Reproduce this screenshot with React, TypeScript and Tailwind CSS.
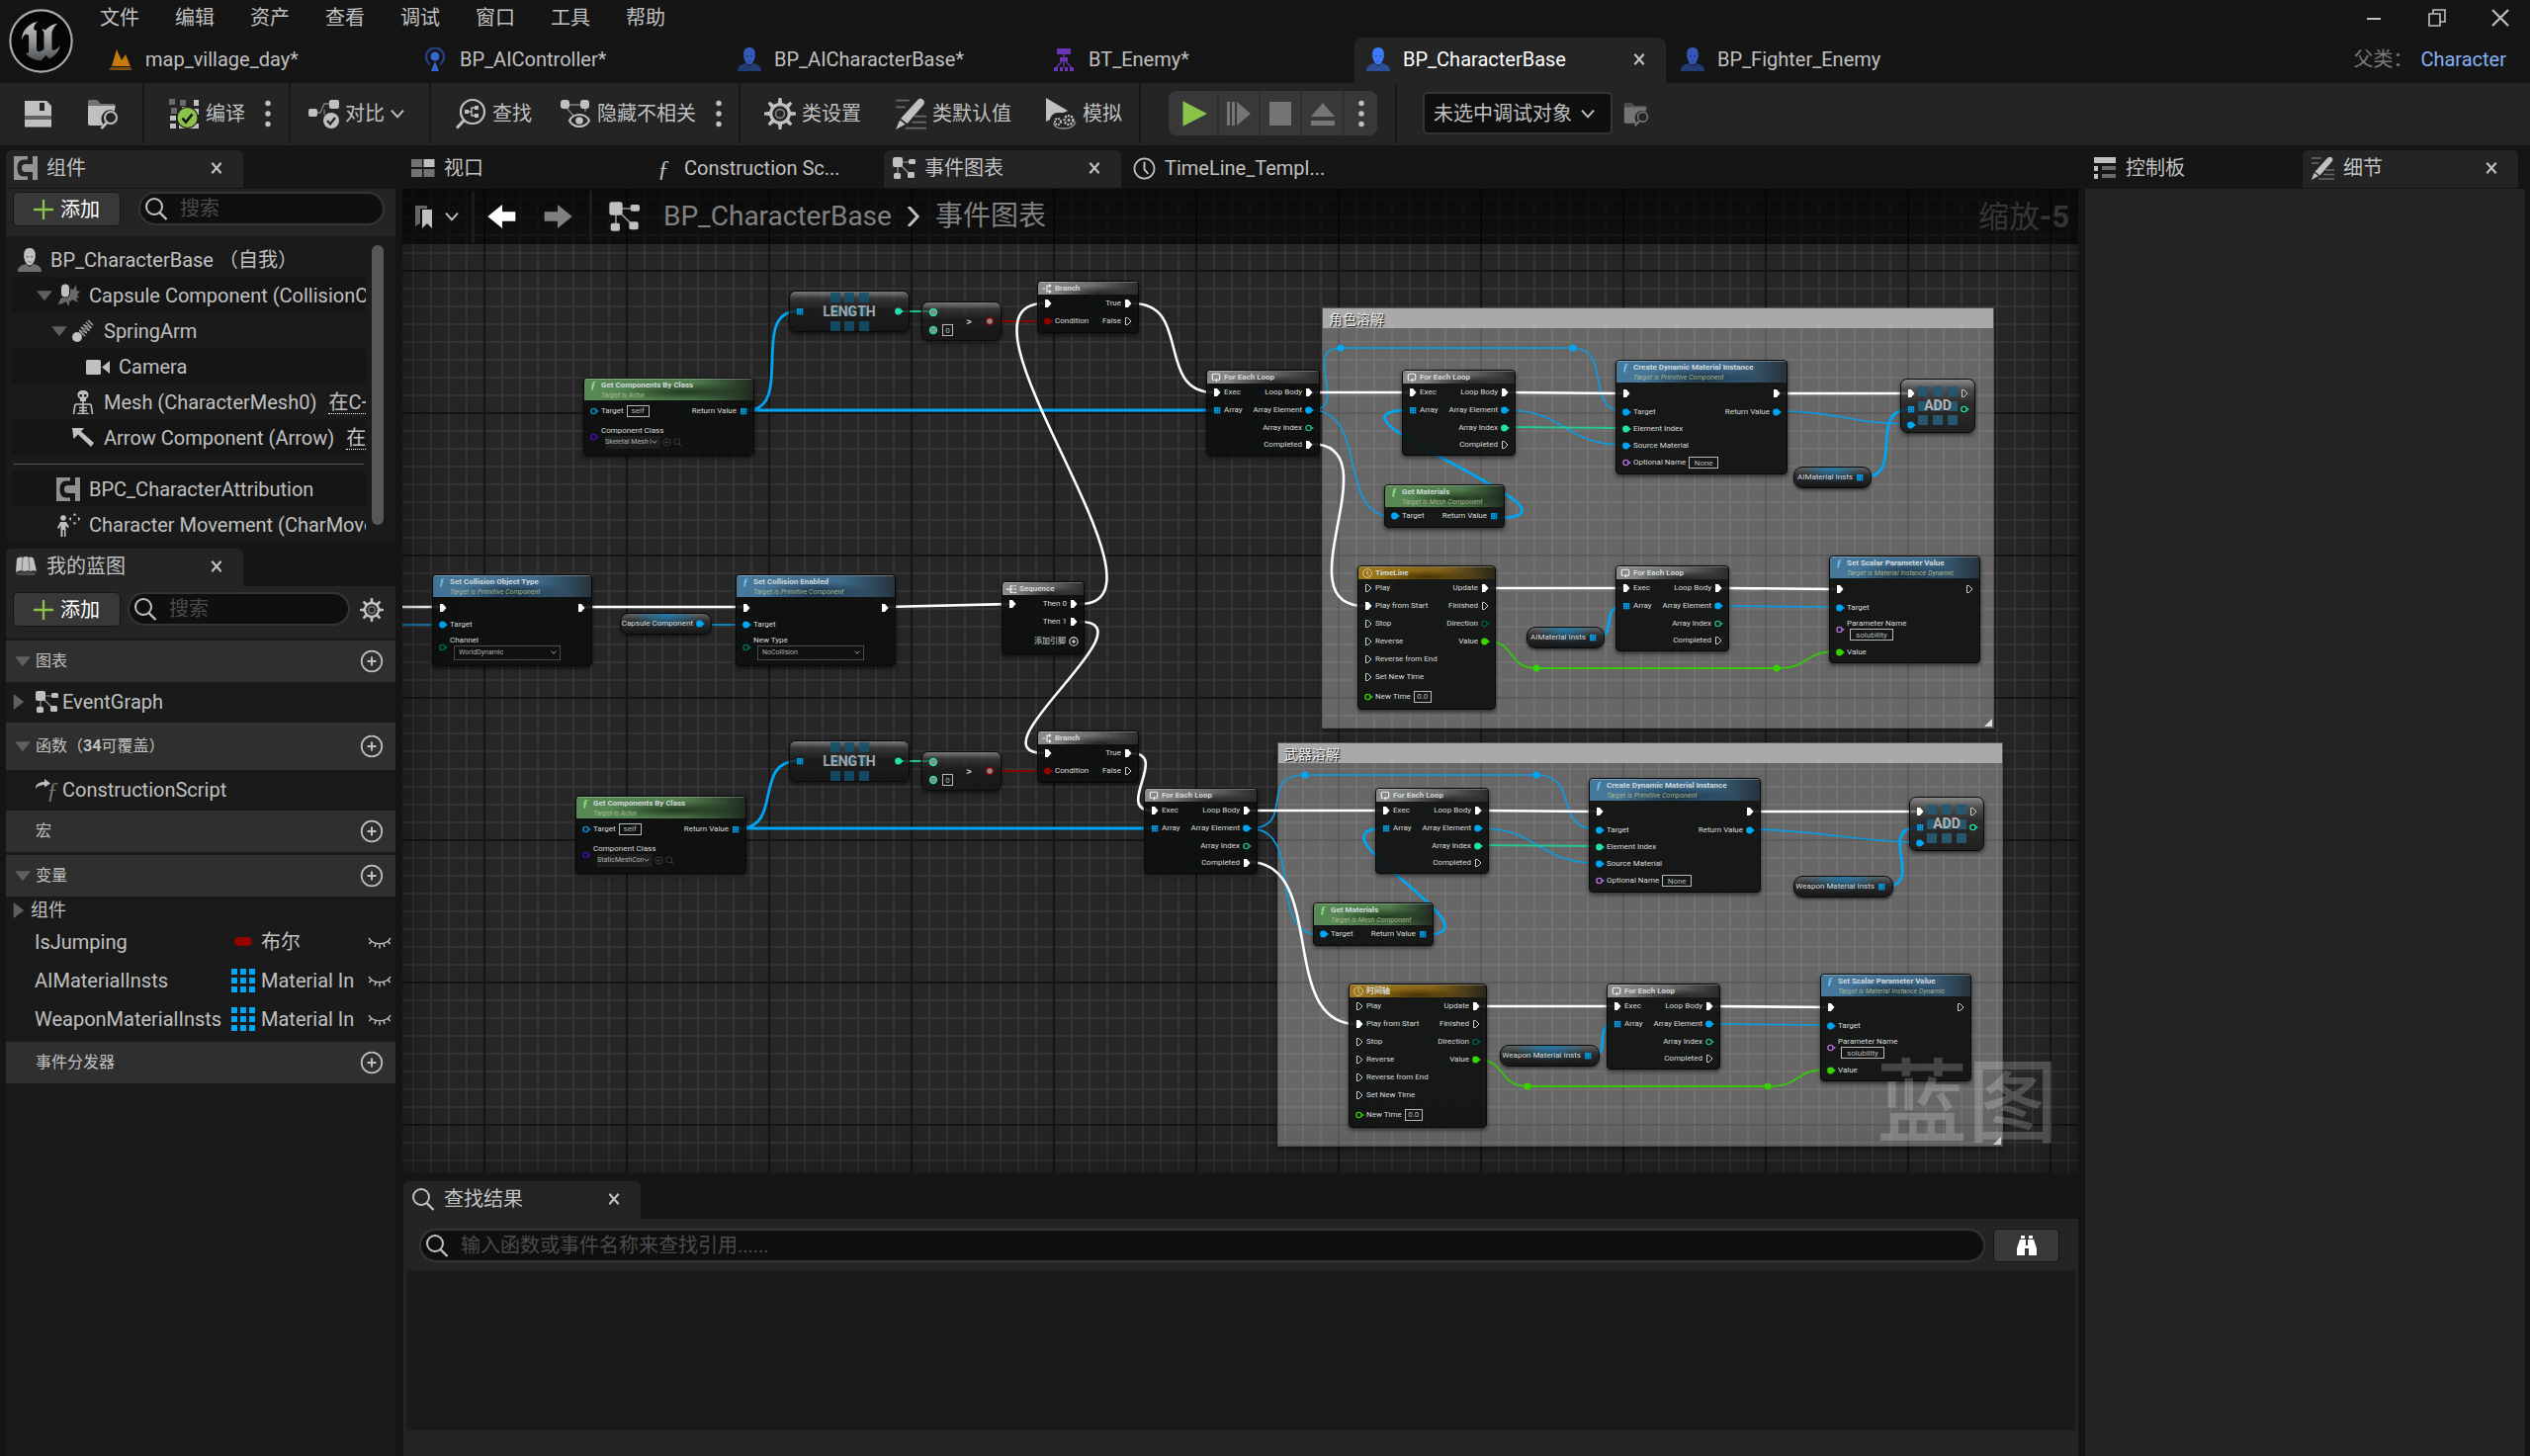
import React from "react";

/* ---------- icons ---------- */

type IconProps = { className?: string };

function Svg({ box = 24, className = "", children }: { box?: number; className?: string; children: React.ReactNode }) {
  return (
    <svg viewBox={`0 0 ${box} ${box}`} className={`shrink-0 ${className}`} fill="currentColor" aria-hidden="true">
      {children}
    </svg>
  );
}

const CloseX = ({ className = "size-[14px]" }: IconProps) => (
  <Svg className={className}>
    <path d="M4 3l16 18M20 3L4 21" stroke="currentColor" strokeWidth="3.6" fill="none" />
  </Svg>
);

const Chevron = ({ className = "size-4" }: IconProps) => (
  <Svg className={className}>
    <path d="M3 7l9 10 9-10" stroke="currentColor" strokeWidth="3" fill="none" />
  </Svg>
);

const SearchIcon = ({ className = "size-6" }: IconProps) => (
  <Svg className={className}>
    <circle cx="10" cy="10" r="8" fill="none" stroke="currentColor" strokeWidth="2" />
    <path d="M15.5 16l7 7" stroke="currentColor" strokeWidth="2.4" />
  </Svg>
);

const GraphIcon = ({ className = "size-6" }: IconProps) => (
  <Svg className={className}>
    <path d="M6 6h14M6 6v14M6 6l13 13" stroke="currentColor" strokeWidth="1.2" fill="none" opacity=".75" />
    <rect x="1" y="1" width="10" height="10" rx="2" />
    <rect x="17" y="3" width="7" height="5" rx="1.5" />
    <rect x="2" y="17" width="7" height="6" rx="1.5" />
    <rect x="16" y="16" width="7" height="6" rx="1.5" />
  </Svg>
);

const ComponentIcon = ({ className = "size-6" }: IconProps) => (
  <Svg className={className}>
    <path d="M0 0h14v3.500h-4C5.500 3.500 3.500 7 3.500 12s2 8.500 6.500 8.500h4V24H0z" opacity=".72" />
    <path d="M24 0v24h-5v-8h-7c-3 0-4-1.500-4-4s1-4 4-4h7V0z" opacity=".72" />
  </Svg>
);

const PersonIcon = ({ head, body, className = "size-6" }: IconProps & { head: string; body: string }) => (
  <Svg className={className}>
    <path fill={body} d="M0 24c0-5 3-6.500 8-8l4 3 4-3c5 1.500 8 3 8 8z" />
    <path fill={head} d="M12 0C8 0 5.800 3 6.300 7.500 6 8 5.800 9 6.600 10.500 7 13 9 17.500 12 17.500s5-4.500 5.400-7c.8-1.500.6-2.500.3-3C18.200 3 16 0 12 0z" />
    <path fill={body} d="M8.500 8h2.500v1.300H8.500zM13 8h2.500v1.300H13zM10.500 13.500h3v1h-3z" />
  </Svg>
);

const GearIcon = ({ className = "size-6" }: IconProps) => (
  <Svg className={className}>
    <g>
      {[0, 45, 90, 135, 180, 225, 270, 315].map((a) => (
        <path key={a} d="M10.300 5l.6-5h2.200l.6 5z" transform={`rotate(${a} 12 12)`} />
      ))}
    </g>
    <circle cx="12" cy="12" r="7" fill="none" stroke="currentColor" strokeWidth="2.400" />
    <circle cx="12" cy="12" r="3.300" fill="none" stroke="currentColor" strokeWidth="1.200" opacity=".6" />
  </Svg>
);

const PencilIcon = ({ className = "size-6" }: IconProps) => (
  <Svg className={className}>
    <path d="M1 2h10M1 7h7M15 14h9M13 18.500h11M8 23h16" stroke="currentColor" strokeWidth="1.300" opacity=".45" />
    <path d="M17.500 1.500c1-1 2.500-1.200 3.800-.2s1.500 2.500.7 3.700L9.500 19.500l-5-3.800z" />
    <path d="M3.800 16.800l4.200 3.300L.8 24z" />
  </Svg>
);

const ClockIcon = ({ className = "size-6" }: IconProps) => (
  <Svg className={className}>
    <circle cx="12" cy="12" r="10.500" fill="none" stroke="currentColor" strokeWidth="1.800" />
    <path d="M12 5v8l4 4.500" stroke="currentColor" strokeWidth="2" fill="none" />
  </Svg>
);

const FolderSearch = ({ className = "size-8" }: IconProps) => (
  <Svg box={32} className={className}>
    <path d="M1 3.500C1 2.500 2 2 3 2h7l4 4h13c1 0 2 1 2 2v3H1z" opacity=".5" />
    <path d="M1 8h27v5.500a9 9 0 00-11.500 13.500l-1.500 1H3c-1 0-2-1-2-2z" />
    <circle cx="24" cy="20" r="6" fill="none" stroke="currentColor" strokeWidth="2" />
    <path d="M20 25l-5.500 6" stroke="currentColor" strokeWidth="2.600" />
  </Svg>
);

const SaveIcon = ({ className = "size-8" }: IconProps) => (
  <Svg box={32} className={className}>
    <path fillRule="evenodd" d="M2 3h22l5 5v10H2zM17 5v8h5V5z" />
    <path d="M2 18h27v4H2z" opacity=".4" />
    <path d="M2 22h27v7.500H2z" />
  </Svg>
);

const CompileIcon = ({ className = "size-8" }: IconProps) => (
  <Svg box={32} className={className}>
    <g opacity=".45">
      <path d="M1 1h6v6H1zM12 2h6v6h-6zM3 10h6v6H3z" />
    </g>
    <path d="M26 2h5v6h-5zM14 9h5v5h-5zM25 11h6v6h-6zM2 18h6v5H2zM2 26h6v5H2zM11 26h20v5H11z" />
    <circle cx="19.500" cy="20" r="11" fill="#1b1b1b" />
    <circle cx="19.500" cy="20" r="10" fill="#8bc24a" />
    <path d="M14.500 20.500l3.500 4 6.500-8" stroke="#111" strokeWidth="2.600" fill="none" />
  </Svg>
);

const DiffIcon = ({ className = "size-8" }: IconProps) => (
  <Svg box={32} className={className}>
    <path d="M6 15h7l4-9h8M17 12v5" stroke="currentColor" strokeWidth="1.300" fill="none" opacity=".6" />
    <rect x="1" y="11" width="9" height="8" rx="2" />
    <rect x="22" y="2" width="10" height="9" rx="2" />
    <circle cx="24" cy="23" r="8" />
    <path d="M20 23l3 3.500 5-6.500" stroke="#242424" strokeWidth="2.300" fill="none" />
  </Svg>
);

const FindIcon = ({ className = "size-8" }: IconProps) => (
  <Svg box={32} className={className}>
    <circle cx="18" cy="14" r="12" fill="none" stroke="currentColor" strokeWidth="2.200" />
    <path d="M9.500 22.500L2 30.500" stroke="currentColor" strokeWidth="3" />
    <path d="M12 14h5M21 10h-4v8h4" stroke="currentColor" strokeWidth="1.400" fill="none" />
    <path d="M10 12h4v4h-4zM20 8h4v4h-4zM20 16h4v4h-4z" />
  </Svg>
);

const HideIcon = ({ className = "size-8" }: IconProps) => (
  <Svg box={32} className={className}>
    <path d="M5 7h22M6 9l8 9M26 9v5" stroke="currentColor" strokeWidth="1.400" fill="none" opacity=".6" />
    <rect x="1" y="2" width="9" height="9" rx="3" />
    <rect x="21" y="2" width="9" height="9" rx="3" />
    <path d="M10 23c4-8 16-8 20 0-4 8-16 8-20 0z" fill="none" stroke="currentColor" strokeWidth="2" />
    <circle cx="20" cy="23" r="3.800" />
  </Svg>
);

const SimulateIcon = ({ className = "size-8" }: IconProps) => (
  <Svg box={32} className={className}>
    <path d="M1 0l22 13L1 24z" />
    <rect x="5" y="15" width="27" height="16" rx="8" fill="#242424" />
    <path d="M9 25v2c3 4 6 4 10 4s10-1 12-7" stroke="currentColor" strokeWidth="1.300" fill="none" opacity=".7" />
    <circle cx="13" cy="24" r="3" fill="none" stroke="currentColor" strokeWidth="2" strokeDasharray="1.800 1" />
    <circle cx="24" cy="22.500" r="4.400" fill="none" stroke="currentColor" strokeWidth="2.400" strokeDasharray="2 1.200" />
    <circle cx="24" cy="22.500" r="1.500" />
  </Svg>
);

const MapIcon = () => (
  <Svg className="size-6">
    <path fill="#c47a0c" d="M3 19L8 2l5 11 4-6 5 12z" />
    <path fill="#7a4f12" d="M2 20h20l1.500 3H.5z" />
  </Svg>
);

const ControllerIcon = () => (
  <Svg className="size-6">
    <circle cx="12" cy="9" r="4.500" fill="#3b66d1" />
    <path d="M7 17A9 9 0 1117 17" fill="none" stroke="#243f7c" strokeWidth="2.500" />
    <path d="M12 14l4 10H8z" fill="#3b66d1" />
  </Svg>
);

const TreeIcon = () => (
  <Svg className="size-6">
    <g fill="#6c35b8">
      <path d="M5 1h14v6H5zM8 10h8v4H8zM2 20h4v4H2zM8 20h3v4H8zM13 20h3v4h-3zM18 20h4v4h-4z" />
    </g>
    <path d="M12 7v13M10 14l-6 7M14 14l6 7" stroke="#6c35b8" strokeWidth="1.400" />
  </Svg>
);

const ViewportIcon = () => (
  <Svg className="size-6">
    <path d="M0 3h11v8H0zM0 13h11v8H0zM12.500 13h11v8h-11z" opacity=".55" />
    <path d="M12.500 3h11v8h-11z" />
  </Svg>
);

const PaletteIcon = () => (
  <Svg className="size-6">
    <path d="M1 1h22v6H1zM1 10h4v5H1zM1 18h4v5H1z" />
    <path d="M9 10h14v4H9zM9 18h14v4H9z" opacity=".5" />
  </Svg>
);

const BookIcon = () => (
  <Svg className="size-6">
    <path d="M3 4c2-1.500 4-2 6-1 2-1.500 5-1.500 6 0 2-1 4-.5 5 1l3 13c-2-1-4-1-6 0-2-1-4-1-6 0-2-1-6-1-9 1z" />
    <path d="M1 19c6-2 16-2 22 0l-3 2H5z" opacity=".25" />
    <path d="M9 3L8 17M15 3l1 14" stroke="#777" strokeWidth="1" />
  </Svg>
);

const CapsuleIcon = () => (
  <Svg className="size-6">
    <path d="M14 5l3 1 3-5 .5 6L24 8l-3 3 2 3-3 .5 2 4.500-6-3-1.500 2-1-1-1 6-3-5-3 2-5 1 3-6 3-2z" opacity=".5" />
    <rect x="4.500" y="0" width="9" height="14" rx="4" stroke="#151515" strokeWidth="1" />
  </Svg>
);

const SpringIcon = () => (
  <Svg className="size-6">
    <circle cx="6" cy="18" r="5" />
    <path d="M8 11l6 6M10 8l6 6M12.500 5.500l6 6M15 3l5.500 6M17 1l5 5" stroke="currentColor" strokeWidth="1.500" opacity=".8" />
    <path d="M8 11l8 3M10 8l8.500 3.500M12.500 5.500L20 9" stroke="currentColor" strokeWidth=".9" opacity=".8" />
  </Svg>
);

const CameraIcon = () => (
  <Svg className="size-6">
    <rect x="0" y="5" width="15" height="15" rx="1.500" />
    <path d="M16 12.500L24 6v13z" />
  </Svg>
);

const SkeletonIcon = () => (
  <Svg className="size-6">
    <path fillRule="evenodd" d="M12 0c-4 0-5.500 2-5.500 4.500C6.500 7 8 8 9 8.500V11h6V8.500c1-.5 2.500-1.500 2.500-4C17.500 2 16 0 12 0zM8.500 4h2.500v2.500H8.500zM13 4h2.500v2.500H13z" />
    <path d="M12 11v13M4 14h16M8 17.500h8M8 20.500h8M6 23.500h12M4 14L2.500 24M20 14l1.500 10" stroke="currentColor" strokeWidth="1.600" fill="none" />
  </Svg>
);

const ArrowCompIcon = () => (
  <Svg className="size-6">
    <path d="M1 2h12l-3 3.500L23 17l-3 4L7 8.500 2.500 13z" />
  </Svg>
);

const MovementIcon = () => (
  <Svg className="size-6">
    <circle cx="7" cy="5" r="2.800" />
    <path d="M4 9h6l3 5-1.500 1-2-2.500V24H8v-7H6.500v7H4.500V12.500L2.500 16 1 15z" />
    <path d="M18.500 0l2 2.500h-4zM18.500 12l2-2.500h-4zM12.500 6l2.500-2v4zM24.500 6L22 4v4z" />
  </Svg>
);

const ConstructIcon = () => (
  <span className="relative size-6 shrink-0">
    <Svg className="absolute inset-0 size-6">
      <path d="M1 11c0-5 4-7 9-7V1l6 4.500-6 4V7C6 7 3 8 1 11z" />
    </Svg>
    <FGlyph className="absolute right-0 bottom-0 text-[24px] text-[#777]" />
  </span>
);

const ClosedEye = () => (
  <Svg className="size-6">
    <path d="M1 8c4 7.500 18 7.500 22 0M3.500 11.500L1.500 14M8 14l-1 3M12 15v3.500M16 14l1 3M20.500 11.500l2 2.500" stroke="currentColor" strokeWidth="1.500" fill="none" />
  </Svg>
);

const PlusCircle = () => (
  <Svg className="size-6">
    <circle cx="12" cy="12" r="10.300" fill="none" stroke="currentColor" strokeWidth="1.700" />
    <path d="M12 7.500v9M7.500 12h9" stroke="currentColor" strokeWidth="2" />
  </Svg>
);

const LoopIcon = () => (
  <Svg className="size-[10px] text-[#f0f0f0]">
    <path d="M7 18c-3 0-4-1-4-4V7c0-3 1-4 4-4h10c3 0 4 1 4 4v7c0 3-1 4-4 4h-1" stroke="currentColor" strokeWidth="2.800" fill="none" />
    <path d="M8 18l7-5v10z" />
  </Svg>
);

const BranchIcon = () => (
  <Svg className="size-[10px] text-[#f0f0f0]">
    <path d="M1 12h7M19 5h-7v14h7" stroke="currentColor" strokeWidth="2.600" fill="none" />
    <path d="M17 0l6 5-6 5zM17 14l6 5-6 5z" />
  </Svg>
);

const SequenceIcon = () => (
  <Svg className="size-[10px] text-[#f0f0f0]">
    <path d="M0 12h10M10 3v18" stroke="currentColor" strokeWidth="3" fill="none" />
    <path d="M10 4h14M10 12h14M10 20h14" stroke="currentColor" strokeWidth="2.600" fill="none" strokeDasharray="6 2" />
  </Svg>
);

const FGlyph = ({ className = "" }: IconProps) => (
  <span className={`shrink-0 font-['Liberation_Serif',serif] leading-none italic ${className}`} aria-hidden="true">
    ƒ
  </span>
);

const Dots = () => (
  <Svg className="h-[26px] w-[6px] overflow-visible">
    <circle cx="12" cy="-30" r="11" />
    <circle cx="12" cy="12" r="11" />
    <circle cx="12" cy="54" r="11" />
  </Svg>
);

const Twisty = ({ open = false }: { open?: boolean }) => (
  <Svg className="size-4 text-[#5f5f5f]">{open ? <path d="M0 5h24L12 20z" /> : <path d="M4 0v24L20 12z" />}</Svg>
);

/* ---------- graph pins ---------- */

type PinKind = "exec" | "execOff" | "dot" | "ring" | "array";
type PinSpec = { kind: PinKind; color?: string; label?: string; field?: React.ReactNode };

const BLUE = "#00a6f4";
const GREEN = "#22e0aa";
const LIME = "#37d300";
const RED = "#950000";
const VIOLET = "#b56fe0";

function Pin({ kind, color = "#ffffff" }: { kind: PinKind; color?: string }) {
  return (
    <svg viewBox="0 0 10 10" className="size-[10px] shrink-0" aria-hidden="true">
      {kind === "exec" && <path d="M2 1h3l3.500 4L5 9H2z" fill="#fff" />}
      {kind === "execOff" && <path d="M2.500 1.500h2l3.500 3.500-3.500 3.500h-2z" fill="none" stroke="#d0d0d0" />}
      {kind === "dot" && (
        <g fill={color}>
          <circle cx="4.500" cy="5" r="3.400" />
          <path d="M7 3l3 2-3 2z" />
        </g>
      )}
      {kind === "ring" && (
        <g>
          <circle cx="4.500" cy="5" r="2.600" fill="#0c0f0d" stroke={color} strokeWidth="1.400" />
          <path d="M7.500 3.500L10 5 7.500 6.500z" fill={color} />
        </g>
      )}
      {kind === "array" &&
        [0, 1, 2].map((r) =>
          [0, 1, 2].map((c) => <rect key={`${r}${c}`} x={2 + c * 2.2} y={2 + r * 2.2} width="1.900" height="1.900" fill={color} />),
        )}
    </svg>
  );
}

const exec = (label?: string): PinSpec => ({ kind: "exec", label });
const execOff = (label?: string): PinSpec => ({ kind: "execOff", label });
const dot = (color: string, label?: string): PinSpec => ({ kind: "dot", color, label });
const ring = (color: string, label?: string, field?: React.ReactNode): PinSpec => ({ kind: "ring", color, label, field });
const arr = (label?: string): PinSpec => ({ kind: "array", color: BLUE, label });

const Field = ({ value, label, className }: { value: string; label: string; className: string }) => (
  <input
    aria-label={label}
    defaultValue={value}
    className={`h-[12px] border border-[#b8b8b8] bg-transparent text-center text-[8px] leading-none text-[#b8b8b8] outline-none ${className}`}
  />
);

const MiniSelect = ({ value, label, className }: { value: string; label: string; className: string }) => (
  <span className={`relative flex items-center ${className}`}>
    <select aria-label={label} className="size-full appearance-none overflow-hidden bg-transparent pr-[9px] text-[7px] leading-none text-[#b0b0b0] outline-none">
      <option>{value}</option>
    </select>
    <Chevron className="pointer-events-none absolute right-[3px] size-[6px] text-[#cccccc]" />
  </span>
);

/* ---------- graph nodes ---------- */

const ROW = {
  xs: "h-[14px]",
  s: "h-[17px]",
  m: "h-[18px]",
  l: "h-[21px]",
  xl: "h-[28px]",
  xxl: "h-[32px]",
};

type Row = { size: keyof typeof ROW; l?: PinSpec; r?: PinSpec; stacked?: boolean; extra?: React.ReactNode };

type Tone = "blue" | "green" | "gray" | "gold";

const TONE: Record<Tone, string> = {
  blue: "bg-[radial-gradient(ellipse_at_50%_80%,rgba(8,18,26,0.7),transparent_50%),linear-gradient(to_right,#47799d_0%,#3f6c8e_65%,#26333d_100%)]",
  green: "bg-[radial-gradient(ellipse_at_60%_60%,rgba(14,28,12,0.7),transparent_50%),linear-gradient(to_right,#588a55_0%,#4f7c4c_65%,#1f2a20_100%)]",
  gray: "bg-[radial-gradient(ellipse_at_60%_90%,rgba(10,10,10,0.7),transparent_50%),linear-gradient(to_right,#8c8c8c_0%,#6e6e6e_55%,#2b2b2b_100%)]",
  gold: "bg-[radial-gradient(ellipse_at_50%_80%,rgba(40,26,0,0.7),transparent_50%),linear-gradient(to_right,#9b761a_0%,#866517_60%,#2a261b_100%)]",
};

type NodeData = {
  x: number;
  y: number;
  w: number;
  tone: Tone;
  title: string;
  sub?: string;
  icon: React.ReactNode;
  rows: Row[];
};

/* Graph coordinates of the canvas' top-left corner. */
const VIEW = { x: 407, y: 191 };

function PinSide({ pin, side, stacked }: { pin?: PinSpec; side: "l" | "r"; stacked?: boolean }) {
  if (!pin) return <span />;
  return (
    <span className={`flex items-center gap-[2px] ${side === "r" ? "flex-row-reverse" : ""}`}>
      <Pin kind={pin.kind} color={pin.color} />
      <span className={stacked ? "flex flex-col items-start" : "flex items-center gap-[3px]"}>
        {pin.label && <span className={stacked ? "leading-[10px]" : "leading-none"}>{pin.label}</span>}
        {pin.field}
      </span>
    </span>
  );
}

function GraphNode({ n }: { n: NodeData }) {
  return (
    <article
      className="absolute overflow-hidden rounded-[4px] border border-[#080808] bg-[#0c0f0d]/90 text-[8px] text-[#dcdcdc] shadow-[0_2px_4px_rgba(0,0,0,0.6)]"
      style={{ left: n.x - VIEW.x, top: n.y - VIEW.y, width: n.w }}
    >
      <header className={`flex items-center gap-[3px] border-t border-white/30 px-1 whitespace-nowrap ${n.sub ? "h-[22px]" : "h-[13px]"} ${TONE[n.tone]}`}>
        <span className={`flex w-[10px] justify-center ${n.sub ? "self-start" : ""}`}>{n.icon}</span>
        <span className="flex flex-col">
          <span className="leading-[10px] font-bold text-[#d3d9da]">{n.title}</span>
          {n.sub && <span className="text-[7px] leading-[10px] text-[#a9b88f] italic">{n.sub}</span>}
        </span>
      </header>
      {n.rows.map((r, i) => (
        <div key={i} className={`flex items-center justify-between px-[5px] whitespace-nowrap ${ROW[r.size]}`}>
          <PinSide pin={r.l} side="l" stacked={r.stacked} />
          {r.extra}
          <PinSide pin={r.r} side="r" />
        </div>
      ))}
      <div className="h-[2px]" />
    </article>
  );
}

const blueF = <FGlyph className="text-[11px] font-bold text-[#7cc4f0]" />;
const greenF = <FGlyph className="text-[11px] font-bold text-[#9be08c]" />;

const forEach = (x: number, y: number, opts: { used?: boolean; index?: boolean }): NodeData => ({
  x, y, w: 115, tone: "gray", title: "For Each Loop", icon: <LoopIcon />,
  rows: [
    { size: "m", l: exec("Exec"), r: exec("Loop Body") },
    { size: "m", l: arr("Array"), r: dot(BLUE, "Array Element") },
    { size: "s", r: opts.index ? dot(GREEN, "Array Index") : ring("#1fb58c", "Array Index") },
    { size: "s", r: opts.used ? exec("Completed") : execOff("Completed") },
  ],
});

const branch = (x: number, y: number): NodeData => ({
  x, y, w: 103, tone: "gray", title: "Branch", icon: <BranchIcon />,
  rows: [
    { size: "m", l: exec(), r: exec("True") },
    { size: "m", l: dot(RED, "Condition"), r: execOff("False") },
  ],
});

const getComponents = (x: number, y: number, cls: string): NodeData => ({
  x, y, w: 173, tone: "green", title: "Get Components By Class", sub: "Target is Actor", icon: greenF,
  rows: [
    { size: "l", l: ring("#0a8ed0", "Target", <Field value="self" label="Target" className="w-[23px]" />), r: arr("Return Value") },
    {
      size: "xxl", stacked: true,
      l: ring("#4a0ab8", "Component Class", (
        <span className="ml-1 flex items-center gap-[2px]">
          <MiniSelect value={cls} label="Component Class" className="h-[13px] w-[56px] bg-[#1d1f1e]" />
          <Svg className="size-[9px] text-[#4a4a4a]">
            <circle cx="12" cy="12" r="10" fill="none" stroke="currentColor" strokeWidth="2" />
            <path d="M18 12H8M12 7l-5 5 5 5" stroke="currentColor" strokeWidth="2" fill="none" />
          </Svg>
          <SearchIcon className="size-[9px] text-[#4a4a4a]" />
        </span>
      )),
    },
  ],
});

const getMaterials = (x: number, y: number): NodeData => ({
  x, y, w: 122, tone: "green", title: "Get Materials", sub: "Target is Mesh Component", icon: greenF,
  rows: [{ size: "m", l: dot(BLUE, "Target"), r: arr("Return Value") }],
});

const createMaterial = (x: number, y: number): NodeData => ({
  x, y, w: 174, tone: "blue", title: "Create Dynamic Material Instance", sub: "Target is Primitive Component", icon: blueF,
  rows: [
    { size: "l", l: exec(), r: exec() },
    { size: "s", l: dot(BLUE, "Target"), r: dot(BLUE, "Return Value") },
    { size: "s", l: dot(GREEN, "Element Index") },
    { size: "s", l: dot(BLUE, "Source Material") },
    { size: "m", l: ring(VIOLET, "Optional Name", <Field value="None" label="Optional Name" className="w-[30px]" />) },
  ],
});

const timeline = (x: number, y: number, title: string): NodeData => ({
  x, y, w: 140, tone: "gold", title, icon: <ClockIcon className="size-[10px] text-[#f0e6c8]" />,
  rows: [
    { size: "m", l: execOff("Play"), r: exec("Update") },
    { size: "m", l: exec("Play from Start"), r: execOff("Finished") },
    { size: "m", l: execOff("Stop"), r: ring("#045a4e", "Direction") },
    { size: "m", l: execOff("Reverse"), r: dot(LIME, "Value") },
    { size: "m", l: execOff("Reverse from End") },
    { size: "m", l: execOff("Set New Time") },
    { size: "l", l: ring(LIME, "New Time", <Field value="0.0" label="New Time" className="w-[18px]" />) },
  ],
});

const setScalar = (x: number, y: number): NodeData => ({
  x, y, w: 153, tone: "blue", title: "Set Scalar Parameter Value", sub: "Target is Material Instance Dynamic", icon: blueF,
  rows: [
    { size: "l", l: exec(), r: execOff() },
    { size: "s", l: dot(BLUE, "Target") },
    { size: "xl", stacked: true, l: ring(VIOLET, "Parameter Name", <Field value="solubility" label="Parameter Name" className="ml-[3px] w-[44px]" />) },
    { size: "s", l: dot(LIME, "Value") },
  ],
});

const setCollision = (x: number, title: string, label: string, value: string): NodeData => ({
  x, y: 581, w: 162, tone: "blue", title, sub: "Target is Primitive Component", icon: blueF,
  rows: [
    { size: "l", l: exec(), r: exec() },
    { size: "xs", l: dot(BLUE, "Target") },
    { size: "xxl", stacked: true, l: ring("#006b5f", label, <MiniSelect value={value} label={label} className="ml-1 h-[15px] w-[108px] border border-[#4a4a4a] pl-1" />) },
  ],
});

function PlusCircleSmall() {
  return (
    <Svg className="size-[10px]">
      <circle cx="12" cy="12" r="10" fill="none" stroke="currentColor" strokeWidth="2.600" />
      <path d="M12 7v10M7 12h10" stroke="currentColor" strokeWidth="3" />
    </Svg>
  );
}

const NODES: NodeData[] = [
  getComponents(590, 382, "Skeletal Mesh Co"),
  branch(1049, 284),
  setCollision(437, "Set Collision Object Type", "Channel", "WorldDynamic"),
  setCollision(744, "Set Collision Enabled", "New Type", "NoCollision"),
  {
    x: 1013, y: 588, w: 84, tone: "gray", title: "Sequence", icon: <SequenceIcon />,
    rows: [
      { size: "m", l: exec(), r: exec("Then 0") },
      { size: "m", r: exec("Then 1") },
      {
        size: "l",
        extra: (
          <button className="ml-auto flex items-center gap-[3px] leading-none">
            添加引脚 <PlusCircleSmall />
          </button>
        ),
      },
    ],
  },
  forEach(1220, 374, { used: true }),
  forEach(1418, 374, { index: true }),
  getMaterials(1400, 490),
  createMaterial(1634, 364),
  timeline(1373, 572, "TimeLine"),
  forEach(1634, 572, {}),
  setScalar(1850, 562),
  getComponents(582, 805, "StaticMeshCom"),
  branch(1049, 739),
  forEach(1157, 797, { used: true }),
  forEach(1391, 797, { index: true }),
  getMaterials(1328, 913),
  createMaterial(1607, 787),
  timeline(1364, 995, "时间轴"),
  forEach(1625, 995, {}),
  setScalar(1841, 985),
];

const COMPACT =
  "absolute rounded-[7px] border border-[#0a0a0a] bg-[linear-gradient(to_bottom,rgba(150,150,150,0.75)_0%,rgba(60,60,60,0.6)_18%,rgba(24,24,24,0.75)_45%,rgba(20,20,20,0.85)_100%)] shadow-[0_2px_4px_rgba(0,0,0,0.6)]";

function LengthNode({ x, y }: { x: number; y: number }) {
  return (
    <article className={`${COMPACT} flex h-[42px] w-[122px] items-center justify-between px-[5px]`} style={{ left: x - VIEW.x, top: y - VIEW.y }}>
      <svg viewBox="0 0 40 40" className="absolute top-0 left-[40px] size-[40px]" aria-hidden="true">
        {[1, 15, 30].map((c) => [1, 15, 30].map((r) => <rect key={`${c}-${r}`} x={c} y={r} width="10" height="10" fill="#13516f" opacity=".85" />))}
      </svg>
      <Pin kind="array" color={BLUE} />
      <strong className="relative text-[14px] leading-none text-[#a4a4a4]">LENGTH</strong>
      <Pin kind="dot" color={GREEN} />
    </article>
  );
}

const CirclePin = ({ color }: { color: string }) => (
  <svg viewBox="0 0 10 10" className="size-[10px]" aria-hidden="true">
    <circle cx="5" cy="5" r="3.500" fill="#8a8a8a" stroke={color} strokeWidth="1.400" />
  </svg>
);

function GreaterNode({ x, y }: { x: number; y: number }) {
  return (
    <article className={`${COMPACT} flex h-[40px] w-[81px] items-center justify-between px-[6px] text-[8px] text-[#b8b8b8]`} style={{ left: x - VIEW.x, top: y - VIEW.y }}>
      <span className="flex flex-col gap-[8px]">
        <CirclePin color={GREEN} />
        <span className="flex h-[11px] items-center gap-[4px]">
          <CirclePin color={GREEN} />
          <Field value="0" label="B" className="w-[11px]" />
        </span>
      </span>
      <strong className="text-[11px] leading-none">&gt;</strong>
      <CirclePin color={RED} />
    </article>
  );
}

function AddNode({ x, y }: { x: number; y: number }) {
  return (
    <article className={`${COMPACT} flex h-[55px] w-[76px] justify-between px-[5px] pt-[9px]`} style={{ left: x - VIEW.x, top: y - VIEW.y }}>
      <svg viewBox="0 0 40 40" className="absolute top-[7px] left-[17px] size-[40px]" aria-hidden="true">
        {[0, 15, 30].map((c) => [0, 15, 29].map((r) => <rect key={`${c}-${r}`} x={c} y={r} width="10" height="10" fill="#27576e" />))}
      </svg>
      <span className="flex flex-col gap-[6px]">
        <Pin kind="exec" />
        <Pin kind="array" color={BLUE} />
        <Pin kind="dot" color={BLUE} />
      </span>
      <strong className="relative pt-[10px] text-[14px] leading-none text-[#b4b4b4]">ADD</strong>
      <span className="flex flex-col gap-[6px]">
        <Pin kind="execOff" />
        <Pin kind="ring" color={GREEN} />
      </span>
    </article>
  );
}

function VariablePill({ x, y, w, label, single }: { x: number; y: number; w: number; label: string; single?: boolean }) {
  return (
    <article
      className="absolute flex h-[22px] items-center justify-end gap-[2px] rounded-[9px] border border-[#0a0a0a] bg-[radial-gradient(ellipse_at_50%_0%,rgba(20,130,190,0.8),transparent_55%),linear-gradient(to_bottom,#626262,#2b2d2e_40%,#141617)] pr-[6px] text-[8px] whitespace-nowrap text-[#dcdcdc] shadow-[0_2px_3px_rgba(0,0,0,0.5)]"
      style={{ left: x - VIEW.x, top: y - VIEW.y, width: w }}
    >
      <span className="leading-none">{label}</span>
      <Pin kind={single ? "dot" : "array"} color={BLUE} />
    </article>
  );
}

function Comment({ x, y, w, h, title }: { x: number; y: number; w: number; h: number; title: string }) {
  return (
    <section className="absolute border border-[#565656] bg-white/30 shadow-[0_2px_6px_rgba(0,0,0,0.5)]" style={{ left: x - VIEW.x, top: y - VIEW.y, width: w, height: h }}>
      <h3 className="h-[20px] bg-[#a9a9a9] pl-[6px] text-[14px] leading-[22px] text-[#eeeeee] [text-shadow:1px_1px_1px_#000]">{title}</h3>
      <Svg className="absolute right-[1px] bottom-[1px] size-[8px] text-[#dcdcdc]">
        <path d="M24 0v24H0z" />
      </Svg>
    </section>
  );
}

/* ---------- wires ---------- */

const wire = (x1: number, y1: number, x2: number, y2: number, t = 0) => `M${x1} ${y1}C${x1 + t} ${y1} ${x2 - t} ${y2} ${x2} ${y2}`;

const WHITE_WIRES = [
  wire(400, 614, 447, 614), wire(590, 614, 752, 614), wire(896, 614, 1022, 611),
  wire(1092, 611, 1056, 307, 108), wire(1092, 629, 1056, 762, 76),
  wire(1146, 307, 1228, 397, 60), wire(1326, 397, 1426, 397), wire(1326, 449, 1380, 613, 85),
  wire(1524, 397, 1642, 398), wire(1800, 398, 1930, 398),
  wire(1504, 595, 1642, 595), wire(1740, 595, 1858, 596),
  wire(1144, 762, 1166, 820, 40), wire(1263, 820, 1400, 820), wire(1263, 872, 1372, 1036, 80),
  wire(1497, 820, 1615, 821), wire(1772, 821, 1939, 821),
  wire(1494, 1018, 1633, 1018), wire(1730, 1018, 1849, 1019),
];

const THICK_BLUE = [
  wire(756, 415, 1230, 415), wire(756, 415, 806, 315, 48),
  wire(748, 838, 1167, 838), wire(748, 838, 806, 770, 44),
  wire(1513, 524, 1427, 415, 118), wire(1440, 946, 1401, 838, 88),
  wire(1884, 483, 1932, 414, 45), wire(1613, 645, 1642, 613, 25),
  wire(1905, 897, 1941, 837, 45), wire(1608, 1069, 1634, 1036, 25),
];

const THIN_BLUE = [
  wire(400, 632, 447, 632), wire(710, 632, 752, 632),
  wire(1326, 415, 1356, 352, 40), wire(1356, 352, 1591, 352), wire(1591, 352, 1642, 416, 40),
  wire(1326, 415, 1410, 523, 60), wire(1524, 415, 1642, 450, 60), wire(1800, 416, 1932, 429, 60),
  wire(1740, 613, 1858, 614),
  wire(1263, 838, 1320, 784, 50), wire(1320, 784, 1554, 784), wire(1554, 784, 1615, 839, 45),
  wire(1263, 838, 1337, 946, 60), wire(1497, 838, 1615, 873, 60), wire(1772, 839, 1941, 852, 60),
  wire(1730, 1036, 1849, 1037),
];

const GREEN_WIRES = [wire(907, 315, 944, 315), wire(907, 770, 944, 770), wire(1524, 432, 1642, 433), wire(1497, 855, 1615, 856)];
const RED_WIRES = [wire(1002, 325, 1060, 325), wire(1002, 780, 1060, 780)];
const LIME_WIRES = [
  wire(1504, 649, 1554, 676, 30), wire(1554, 676, 1797, 676), wire(1797, 676, 1858, 659, 35),
  wire(1494, 1072, 1545, 1099, 30), wire(1545, 1099, 1788, 1099), wire(1788, 1099, 1849, 1082, 35),
];
const BLUE_KNOTS = [[1356, 352], [1591, 352], [1320, 784], [1554, 784]];
const LIME_KNOTS = [[1554, 676], [1797, 676], [1545, 1099], [1788, 1099]];

function Wires() {
  return (
    <svg className="pointer-events-none absolute inset-0 size-full" fill="none" aria-hidden="true">
      <g transform={`translate(${-VIEW.x} ${-VIEW.y})`}>
        <path d={THIN_BLUE.join("")} stroke="#0d9be0" strokeWidth="1.700" />
        <path d={GREEN_WIRES.join("")} stroke="#27c795" strokeWidth="2" />
        <path d={RED_WIRES.join("")} stroke="#8a0606" strokeWidth="2" />
        <path d={LIME_WIRES.join("")} stroke="#37c70a" strokeWidth="1.800" />
        <path d={THICK_BLUE.join("")} stroke={BLUE} strokeWidth="2.800" />
        <path d={WHITE_WIRES.join("")} stroke="#ffffff" strokeWidth="2.600" />
        {BLUE_KNOTS.map(([x, y]) => <circle key={`${x}${y}`} cx={x} cy={y} r="3.500" fill={BLUE} />)}
        {LIME_KNOTS.map(([x, y]) => <circle key={`${x}${y}`} cx={x} cy={y} r="3.500" fill={LIME} />)}
      </g>
    </svg>
  );
}

function GridBackdrop() {
  return (
    <svg className="pointer-events-none absolute inset-0 size-full" aria-hidden="true">
      <defs>
        <pattern id="minor" x="10" y="10" width="18" height="18" patternUnits="userSpaceOnUse">
          <path d="M0 1h18M1 0v18" stroke="#343434" strokeWidth="2" />
        </pattern>
        <pattern id="major" x="82" y="82" width="144" height="144" patternUnits="userSpaceOnUse">
          <path d="M0 1h144M1 0v144" stroke="#151515" strokeWidth="2" />
        </pattern>
      </defs>
      <rect width="100%" height="100%" fill="#262626" />
      <rect width="100%" height="100%" fill="url(#minor)" />
      <rect width="100%" height="100%" fill="url(#major)" />
    </svg>
  );
}

function GraphCanvas() {
  return (
    <div className="relative min-h-0 flex-1 overflow-hidden">
      <GridBackdrop />
      <Comment x={1337} y={311} w={680} h={426} title="角色溶解" />
      <Comment x={1292} y={751} w={734} h={409} title="武器溶解" />
      <Wires />
      {NODES.map((n, i) => (
        <GraphNode key={i} n={n} />
      ))}
      <LengthNode x={798} y={294} />
      <LengthNode x={798} y={749} />
      <GreaterNode x={932} y={305} />
      <GreaterNode x={932} y={760} />
      <AddNode x={1922} y={383} />
      <AddNode x={1931} y={806} />
      <VariablePill x={627} y={620} w={93} label="Capsule Component" single />
      <VariablePill x={1814} y={472} w={79} label="AIMaterial Insts" />
      <VariablePill x={1544} y={634} w={79} label="AIMaterial Insts" />
      <VariablePill x={1814} y={886} w={101} label="Weapon Material Insts" />
      <VariablePill x={1517} y={1057} w={101} label="Weapon Material Insts" />
      <div className="pointer-events-none absolute inset-0 shadow-[inset_0_0_60px_rgba(0,0,0,0.5)]" />
      <div className="absolute right-[20px] bottom-[24px] text-[92px] leading-none font-medium text-white/20">蓝图</div>

      <div className="absolute inset-x-0 top-0 flex h-[56px] items-center bg-black/60 pl-3 text-[28px] text-[#808080]">
        <button className="flex items-center gap-[6px] text-[#c0c0c0]" aria-label="书签">
          <Svg className="size-6">
            <path d="M1 1h12v3H6v15l-5 3z" opacity=".5" />
            <path d="M8 5h10v19l-5-5-5 5z" />
          </Svg>
          <Chevron className="size-4" />
        </button>
        <span className="ml-3 h-[52px] w-[3px] bg-[#1c1c1c]" />
        <button className="ml-3 text-white" aria-label="后退">
          <Svg className="size-8"><path d="M1 12L12 3v5.500h10v7H12V21z" /></Svg>
        </button>
        <button className="ml-6 text-[#808080]" aria-label="前进">
          <Svg className="size-8"><path d="M23 12L12 3v5.500H2v7h10V21z" /></Svg>
        </button>
        <span className="ml-4 h-[52px] w-[3px] bg-[#1c1c1c]" />
        <GraphIcon className="ml-4 size-8 text-[#c0c0c0]" />
        <nav className="ml-6 flex items-center gap-3 leading-none">
          <a href="#bp">BP_CharacterBase</a>
          <Svg className="size-5 text-[#c0c0c0]"><path d="M6 0l11 12L6 24" stroke="currentColor" strokeWidth="3.500" fill="none" /></Svg>
          <a href="#graph">事件图表</a>
        </nav>
        <span className="mr-[9px] ml-auto text-[31px] leading-none text-[#353535]">缩放<b>-5</b></span>
      </div>
    </div>
  );
}

/* ---------- chrome ---------- */

function DockTab({ icon, label, active, className = "w-60" }: { icon: React.ReactNode; label: string; active?: boolean; className?: string }) {
  return (
    <div className={`flex h-[38px] shrink-0 items-center rounded-t-md pr-5 pb-[2px] pl-2 ${active ? "bg-[#242424]" : ""} ${className}`}>
      <button role="tab" aria-selected={!!active} className="flex items-center gap-[9px] whitespace-nowrap">
        <span className="flex w-6 justify-center">{icon}</span>
        {label}
      </button>
      {active && (
        <button className="ml-auto" aria-label={`关闭 ${label}`}>
          <CloseX />
        </button>
      )}
    </div>
  );
}

function AddButton() {
  return (
    <button className="flex h-[35px] w-[109px] shrink-0 items-center justify-center gap-[7px] rounded-[5px] border border-[#151515] bg-[#383838] text-white">
      <Svg className="size-5 text-[#8bc24a]"><path d="M12 0v24M0 12h24" stroke="currentColor" strokeWidth="2.800" /></Svg>
      添加
    </button>
  );
}

function SearchBox({ placeholder, className = "" }: { placeholder: string; className?: string }) {
  return (
    <label className={`flex h-[34px] min-w-0 items-center gap-3 rounded-full border-2 border-[#343434] bg-[#0f0f0f] pl-1 ${className}`}>
      <SearchIcon />
      <input aria-label={placeholder} placeholder={placeholder} className="min-w-0 flex-1 bg-transparent leading-none outline-none placeholder:text-[#4a4a4a]" />
    </label>
  );
}

const MENUS = ["文件", "编辑", "资产", "查看", "调试", "窗口", "工具", "帮助"];

const darkPerson = <PersonIcon head="#3459b8" body="#233a72" />;
const TABS = [
  { label: "map_village_day*", icon: <MapIcon /> },
  { label: "BP_AIController*", icon: <ControllerIcon /> },
  { label: "BP_AICharacterBase*", icon: darkPerson },
  { label: "BT_Enemy*", icon: <TreeIcon /> },
  { label: "BP_CharacterBase", icon: <PersonIcon head="#3f7bff" body="#2c4f96" />, active: true },
  { label: "BP_Fighter_Enemy", icon: darkPerson },
];

function TitleBar() {
  return (
    <header className="flex h-[84px] shrink-0">
      <svg viewBox="0 0 24 24" className="mt-[9px] ml-[9px] size-[65px] shrink-0" aria-label="Unreal Engine">
        <defs>
          <linearGradient id="metal" x1="0" y1="0" x2="0" y2="1">
            <stop offset="0" stopColor="#c4c8ca" />
            <stop offset=".55" stopColor="#8b8f92" />
            <stop offset="1" stopColor="#4d5052" />
          </linearGradient>
        </defs>
        <circle cx="12" cy="12" r="11.500" fill="#050505" stroke="#a9a9a9" strokeWidth=".8" />
        <path
          fill="url(#metal)"
          d="M19.130 13.729c-.206.997-1.126 3.557-4.060 4.942l-1.179-1.325-1.988 2a7.338 7.338 0 01-5.804-2.978 2.859 2.859 0 00.650.123c.326.006.678-.114.678-.660v-5.394a.89.89 0 00-1.116-.890c-.920.212-1.656 2.509-1.656 2.509a7.304 7.304 0 012.528-5.597 7.408 7.408 0 013.730-1.721c-1.006.573-1.570 1.507-1.570 2.290 0 1.262.760 1.109.984.923v7.280a1.157 1.157 0 00.148.256 1.075 1.075 0 00.880.445c.760 0 1.747-.868 1.747-.868V9.172c0-.600-.452-1.324-.905-1.572 0 0 .838-.149 1.484.346a5.537 5.537 0 01.387-.425c1.508-1.480 2.929-1.902 4.112-2.112 0 0-2.151 1.690-2.151 3.960 0 1.687.043 5.801.043 5.801.799.771 1.986-.342 3.059-1.441z"
        />
      </svg>
      <div className="flex min-w-0 flex-1 flex-col">
        <div className="flex h-[38px] items-center pl-[27px]">
          <nav className="flex gap-9 pb-[2px]">
            {MENUS.map((m) => (
              <button key={m}>{m}</button>
            ))}
          </nav>
          <div className="ml-auto flex gap-10 pr-[18px] pb-[2px]">
            <button aria-label="最小化"><Svg className="size-6"><path d="M5 13h14" stroke="currentColor" strokeWidth="2" /></Svg></button>
            <button aria-label="还原">
              <Svg className="size-6"><path d="M4 8h11v12H4zM8 8V4h12v12h-5" fill="none" stroke="currentColor" strokeWidth="1.600" /></Svg>
            </button>
            <button aria-label="关闭"><Svg className="size-6"><path d="M4 4l16 16M20 4L4 20" stroke="currentColor" strokeWidth="2.200" /></Svg></button>
          </div>
        </div>
        <div className="flex flex-1 items-stretch gap-[3px] pl-6" role="tablist">
          {TABS.map((t) => (
            <div key={t.label} className={`flex w-[315px] shrink-0 items-center rounded-t-lg pr-5 pb-[2px] pl-3 ${t.active ? "bg-[#242424] text-white" : ""}`}>
              <button role="tab" aria-selected={!!t.active} className="flex items-center gap-[13px]">
                {t.icon}
                {t.label}
              </button>
              {t.active && (
                <button className="ml-auto text-[#c0c0c0]" aria-label="关闭标签"><CloseX /></button>
              )}
            </div>
          ))}
          <div className="ml-auto flex items-center gap-2 pr-6 pb-[2px] text-[#7a7a7a]">
            父类：<a href="#character" className="text-[#84b1f4]">Character</a>
          </div>
        </div>
      </div>
    </header>
  );
}

function Tool({ icon, label, className = "" }: { icon: React.ReactNode; label?: string; className?: string }) {
  return (
    <button className={`flex shrink-0 items-center gap-[6px] whitespace-nowrap ${className}`} aria-label={label ? undefined : "工具"}>
      {icon}
      {label}
    </button>
  );
}

const SECTION = "flex h-[61px] shrink-0 items-center border-r-2 border-[#171717]";

function Toolbar() {
  return (
    <div className="flex h-[63px] shrink-0 items-start bg-[#242424]">
      <div className={`${SECTION} w-[146px] gap-[33px] pl-[23px]`}>
        <Tool icon={<SaveIcon />} />
        <Tool icon={<FolderSearch />} />
      </div>
      <div className={`${SECTION} w-[148px] pl-6`}>
        <Tool icon={<CompileIcon />} label="编译" />
        <Tool icon={<Dots />} className="ml-5" />
      </div>
      <div className={`${SECTION} w-[142px] pl-[17px]`}>
        <Tool icon={<DiffIcon />} label="对比" />
        <Chevron className="ml-[5px] size-4" />
      </div>
      <div className={`${SECTION} w-[313px] pl-6`}>
        <Tool icon={<FindIcon />} label="查找" />
        <Tool icon={<HideIcon />} label="隐藏不相关" className="ml-7" />
        <Tool icon={<Dots />} className="ml-5" />
      </div>
      <div className={`${SECTION} w-[405px] pl-6`}>
        <Tool icon={<GearIcon className="size-8" />} label="类设置" />
        <Tool icon={<PencilIcon className="size-8" />} label="类默认值" className="ml-[34px]" />
        <Tool icon={<SimulateIcon />} label="模拟" className="ml-[34px]" />
      </div>
      <div className={`${SECTION} w-[259px] pl-7`}>
        <div className="flex h-[45px] items-center divide-x-2 divide-[#303030] overflow-hidden rounded-lg bg-[#383838] text-[#757575]">
          <button className="flex h-full w-[51px] items-center justify-center text-[#8bc24a]" aria-label="播放"><Svg className="size-7"><path d="M3 1l21 11L3 23z" /></Svg></button>
          <button className="flex h-full w-[42px] items-center justify-center" aria-label="逐帧"><Svg className="size-6"><path d="M0 0h3v24H0zM5 0h3v24H5zM10 0l14 12-14 12z" /></Svg></button>
          <button className="flex h-full w-[42px] items-center justify-center" aria-label="停止"><Svg className="size-6"><path d="M1 0h22v24H1z" /></Svg></button>
          <button className="flex h-full w-[43px] items-center justify-center" aria-label="弹出"><Svg className="size-6"><path d="M12 1l12 14H0zM0 19h24v5H0z" /></Svg></button>
          <button className="flex h-full w-[33px] items-center justify-center text-[#c0c0c0]" aria-label="播放选项"><Dots /></button>
        </div>
      </div>
      <div className="flex h-[61px] items-center gap-[11px] pl-[26px]">
        <div className="relative flex h-[43px] w-[192px] items-center rounded-[5px] border-2 border-[#343434] bg-[#0f0f0f]">
          <select aria-label="调试对象" className="size-full appearance-none bg-transparent pl-[9px] outline-none">
            <option>未选中调试对象</option>
          </select>
          <Chevron className="pointer-events-none absolute right-[15px] size-4" />
        </div>
        <button aria-label="浏览调试对象" className="text-[#757575]"><FolderSearch className="size-[26px]" /></button>
      </div>
    </div>
  );
}

const lightPerson = <PersonIcon head="#c0c0c0" body="#6e6e6e" />;

type TreeRow = { pad: string; open?: boolean; icon: React.ReactNode; label: string; cpp?: string; dark?: boolean };
const TREE: TreeRow[] = [
  { pad: "pl-[6px]", icon: lightPerson, label: "BP_CharacterBase （自我）" },
  { pad: "pl-[25px]", open: true, icon: <CapsuleIcon />, label: "Capsule Component (CollisionCylinder)", dark: true },
  { pad: "pl-[40px]", open: true, icon: <SpringIcon />, label: "SpringArm" },
  { pad: "pl-[75px]", icon: <CameraIcon />, label: "Camera", dark: true },
  { pad: "pl-[60px]", icon: <SkeletonIcon />, label: "Mesh (CharacterMesh0)", cpp: "在C++中编辑" },
  { pad: "pl-[60px]", icon: <ArrowCompIcon />, label: "Arrow Component (Arrow)", cpp: "在C++中编辑", dark: true },
];
const TREE_TAIL: TreeRow[] = [
  { pad: "pl-[45px]", icon: <ComponentIcon />, label: "BPC_CharacterAttribution", dark: true },
  { pad: "pl-[45px]", icon: <MovementIcon />, label: "Character Movement (CharMoveComp)" },
];

function TreeItem({ row }: { row: TreeRow }) {
  return (
    <li className={`flex h-9 items-center overflow-hidden whitespace-nowrap ${row.pad} ${row.dark ? "bg-[#151515]" : ""}`}>
      {row.open && <span className="mr-[4px]"><Twisty open /></span>}
      {row.icon}
      <span className="ml-[9px]">{row.label}</span>
      {row.cpp && <a href="#cpp" className="ml-3 border-b border-dotted border-white leading-[22px]">{row.cpp}</a>}
    </li>
  );
}

function Section({ label, open, tall }: { label: React.ReactNode; open?: boolean; tall?: boolean }) {
  return (
    <div className={`flex items-center bg-[#2f2f2f] pr-3 pl-[9px] text-[16px] ${tall ? "h-12" : "h-[42px]"}`}>
      <span className="mr-[5px] w-4">{open && <Twisty open />}</span>
      {label}
      <button className="ml-auto" aria-label="新增"><PlusCircle /></button>
    </div>
  );
}

function Variable({ name, type, bool }: { name: string; type: string; bool?: boolean }) {
  return (
    <div className="flex h-[39px] items-center pr-1 pb-[2px] pl-[29px] whitespace-nowrap">
      <span className="w-[199px] shrink-0">{name}</span>
      {bool ? (
        <span className="mx-[3px] h-[9px] w-[18px] shrink-0 rounded-full bg-[#950000]" />
      ) : (
        <Svg className="size-6 text-[#00a6f4]">
          <path d="M0 0h6v6H0zM9 0h6v6H9zM18 0h6v6h-6zM0 9h6v6H0zM9 9h6v6H9zM18 9h6v6h-6zM0 18h6v6H0zM9 18h6v6H9zM18 18h6v6h-6z" />
        </Svg>
      )}
      <span className="ml-[6px] flex-1">{type}</span>
      <button aria-label="公开变量"><ClosedEye /></button>
    </div>
  );
}

function LeftPanel() {
  return (
    <aside className="flex w-[394px] shrink-0 flex-col">
      <div className="flex h-[44px] items-end pb-[1px]">
        <DockTab active icon={<ComponentIcon />} label="组件" />
      </div>
      <div className="flex h-12 shrink-0 items-start bg-[#242424] pt-[3px] pr-[11px] pl-[7px]">
        <AddButton />
        <SearchBox placeholder="搜索" className="ml-[18px] flex-1" />
      </div>
      <div className="flex h-[308px] shrink-0 overflow-hidden bg-[#1a1a1a] pl-[6px]">
        <ul className="mt-[6px] w-[358px]">
          {TREE.map((r) => <TreeItem key={r.label} row={r} />)}
          <li className="mx-[2px] mt-2 mb-[7px] h-px bg-[#5a5a5a]" />
          {TREE_TAIL.map((r) => <TreeItem key={r.label} row={r} />)}
        </ul>
        <span className="mt-[9px] ml-[6px] h-[283px] w-3 rounded-full bg-[#575757]" />
      </div>
      <div className="mt-2 flex h-[38px] shrink-0">
        <DockTab active icon={<BookIcon />} label="我的蓝图" />
      </div>
      <div className="flex h-[52px] shrink-0 items-start bg-[#242424] pt-[6px] pr-3 pl-[7px]">
        <AddButton />
        <SearchBox placeholder="搜索" className="ml-[7px] flex-1" />
        <button className="mt-[6px] ml-[10px]" aria-label="设置"><GearIcon /></button>
      </div>
      <div className="flex-1 bg-[#1a1a1a] pt-[3px]">
        <Section open label="图表" />
        <div className="flex h-[41px] items-center gap-2 pb-[2px] pl-[5px]">
          <Twisty />
          <span className="flex items-center gap-1"><GraphIcon />EventGraph</span>
        </div>
        <Section open tall label={<span>函数（<b>34</b>可覆盖）</span>} />
        <div className="flex h-[41px] items-center gap-1 pb-[2px] pl-[29px]"><ConstructIcon />ConstructionScript</div>
        <Section label="宏" />
        <div className="h-[3px]" />
        <Section open label="变量" />
        <div className="flex h-[27px] items-center gap-1 pl-[5px] text-[18px]"><Twisty />组件</div>
        <Variable name="IsJumping" type="布尔" bool />
        <Variable name="AIMaterialInsts" type="Material In" />
        <Variable name="WeaponMaterialInsts" type="Material In" />
        <div className="h-[3px]" />
        <Section label="事件分发器" />
      </div>
    </aside>
  );
}

function CenterPanel() {
  return (
    <main className="flex min-w-0 flex-1 flex-col">
      <div className="flex h-[44px] shrink-0 items-end gap-[3px] pb-[1px] pl-px">
        <DockTab icon={<ViewportIcon />} label="视口" />
        <DockTab icon={<FGlyph className="text-[24px]" />} label="Construction Sc..." />
        <DockTab active icon={<GraphIcon />} label="事件图表" />
        <DockTab icon={<ClockIcon className="size-[23px]" />} label="TimeLine_Templ..." />
      </div>
      <GraphCanvas />
      <div className="mt-2 flex h-[38px] shrink-0 pl-px">
        <DockTab active icon={<SearchIcon />} label="查找结果" />
      </div>
      <section className="ml-px flex h-60 shrink-0 flex-col bg-[#242424] px-[3px] pt-[10px] pb-[26px]">
        <div className="flex gap-2 pr-4 pl-[13px]">
          <SearchBox placeholder="输入函数或事件名称来查找引用......" className="flex-1" />
          <button className="flex h-[34px] w-[67px] items-center justify-center rounded-[5px] border border-[#151515] bg-[#383838] text-white" aria-label="在所有蓝图中查找">
            <Svg className="size-6"><path d="M6 2h4v3H6zM14 2h4v3h-4zM5 6h6v6h2V6h6l3 9v7h-8v-7h-4v7H2v-7z" /></Svg>
          </button>
        </div>
        <div className="mt-2 flex-1 bg-[#1a1a1a]" />
      </section>
    </main>
  );
}

function RightPanel() {
  return (
    <aside className="flex w-[445px] shrink-0 flex-col">
      <div className="flex h-[44px] shrink-0 items-end gap-[3px] pb-[1px]">
        <DockTab icon={<PaletteIcon />} label="控制板" className="w-[217px]" />
        <DockTab active icon={<PencilIcon />} label="细节" className="w-[218px]" />
      </div>
      <div className="flex-1 bg-[#242424]" />
    </aside>
  );
}

export default function App() {
  return (
    <div className="flex h-screen min-h-[900px] flex-col overflow-hidden bg-[#151515] font-['Roboto','Noto_Sans_CJK_SC',sans-serif] text-[20px] leading-[24px] text-[#c0c0c0]">
      <TitleBar />
      <Toolbar />
      <div className="flex min-h-0 flex-1 gap-[7px] pr-[5px] pl-[6px]">
        <LeftPanel />
        <CenterPanel />
        <RightPanel />
      </div>
    </div>
  );
}
